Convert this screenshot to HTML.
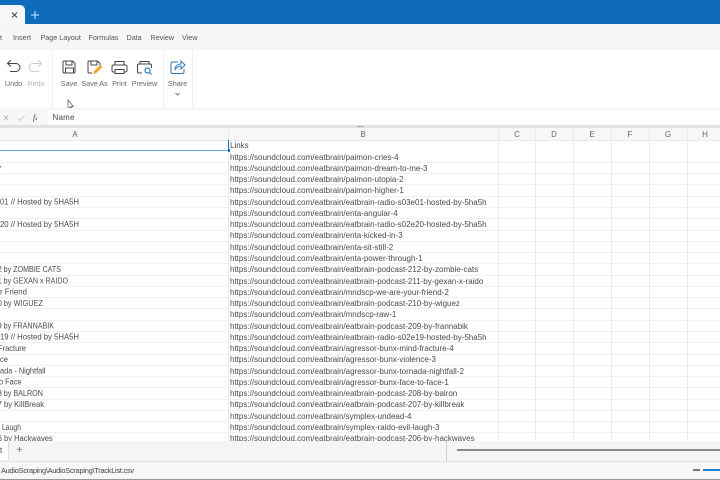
<!DOCTYPE html>
<html><head><meta charset="utf-8"><style>
html,body{margin:0;padding:0;width:720px;height:480px;overflow:hidden;background:#fff}
body{position:relative;font-family:"Liberation Sans",sans-serif;color:#444}
.a{position:absolute}
.t{position:absolute;white-space:nowrap;line-height:12px;height:12px}
.m{font-size:7.2px;top:31.500px;color:#555}
.r{font-size:7.2px;color:#666;top:78px;transform:translateX(-50%)}
.c{position:absolute;font-size:8px;line-height:12px;white-space:nowrap;color:#4a4a4a;margin-top:1.400px;left:230px}
.h{position:absolute;top:129px;font-size:8px;line-height:12px;color:#666;transform:translateX(-50%)}
.v{position:absolute;top:128px;height:313px;width:1px;background:#ebebeb}
.l{position:absolute;left:0;width:720px;height:1px;background:#f0f0f0}
svg{position:absolute;overflow:visible;fill:none}
svg text{font-family:"Liberation Sans",sans-serif;font-size:8px;fill:#4a4a4a;stroke:none}
</style></head><body>
<div class="a" style="left:0;top:0;width:720px;height:24px;background:#0f6cbd"></div>
<div class="a" style="left:0;top:5px;width:25px;height:19px;background:#f7f7f7;border-radius:0 5px 0 0"></div>
<svg style="left:0;top:0" width="60" height="24"><path d="M12 12.500l5 5M17 12.500l-5 5" stroke="#444" stroke-width="1"/><path d="M35 11v8M31 15h8" stroke="#b8d6f0" stroke-width="1.200"/></svg>
<div class="a" style="left:0;top:24px;width:720px;height:26px;background:#f6f6f6"></div>
<div class="t m" style="left:0">t</div><div class="t m" style="left:13px">Insert</div><div class="t m" style="left:40.500px">Page Layout</div><div class="t m" style="left:88.500px">Formulas</div><div class="t m" style="left:126.500px">Data</div><div class="t m" style="left:150.500px">Review</div><div class="t m" style="left:182px">View</div>
<div class="a" style="left:0;top:50px;width:720px;height:58px;background:#fff"></div>
<div class="a" style="left:52px;top:50px;width:1px;height:58px;background:#f0f0f0"></div>
<div class="a" style="left:163px;top:50px;width:1px;height:58px;background:#f0f0f0"></div>
<div class="a" style="left:192px;top:50px;width:1px;height:58px;background:#f0f0f0"></div>
<svg style="left:0;top:50px" width="200" height="58">
<path d="M11 10l-3.500 3.500 3.500 3M8 13.500h8a4 4 0 0 1 0 8h-6" stroke="#444" stroke-width="1"/>
<path d="M38 10l3.500 3.500-3.500 3M41 13.500h-8a4 4 0 0 0 0 8h6" stroke="#ccc" stroke-width="1"/>
<path d="M64 11h8.500l2.500 2.500V22a1 1 0 0 1-1 1H64a1 1 0 0 1-1-1V12a1 1 0 0 1 1-1zM66 11v4h6v-4M65.500 23v-5h8v5" stroke="#444" stroke-width="1"/>
<path d="M89 11h8.500l2.500 2.500V17M89 11a1 1 0 0 0-1 1v10a1 1 0 0 0 1 1h3M91 11v4h6v-4" stroke="#444" stroke-width="1"/>
<path d="M93 24l1-3 6-6 2.500 2-6 6z" fill="#f0a830"/>
<path d="M115 15v-3.500h9V15M113.500 15h12a1.500 1.500 0 0 1 1.500 1.500v4a1.500 1.500 0 0 1-1.500 1.500H124M115 22h-1.500a1.500 1.500 0 0 1-1.500-1.500v-4a1.500 1.500 0 0 1 1.500-1.500M115 19.500h9V23.500h-9z" stroke="#444" stroke-width="1"/>
<path d="M140 14v-2.500h9V14M142 23h-3a1.500 1.500 0 0 1-1.500-1.500v-6A1.500 1.500 0 0 1 139 14h11a1.500 1.500 0 0 1 1.500 1.500V18" stroke="#444" stroke-width="1"/>
<circle cx="147.500" cy="20.500" r="2.500" stroke="#2e7fc4" stroke-width="1.200"/><path d="M149.500 22.500l2 2" stroke="#2e7fc4" stroke-width="1.200"/>
<path d="M178 12h-5.500a1.500 1.500 0 0 0-1.500 1.500v8.500a1.500 1.500 0 0 0 1.500 1.500h10a1.500 1.500 0 0 0 1.500-1.500V19" stroke="#3f6f9e" stroke-width="1"/>
<path d="M175 20c0-4 2.500-6 6-6v-3l4 4-4 4v-3c-2.500 0-4.500 1-6 4z" stroke="#2e7fc4" stroke-width="1"/>
<path d="M175.500 43l2 2 2-2" stroke="#555" stroke-width=".8"/>
<path d="M68 50v9l2-2 1.500 3 1-.5-1.500-3h2.500z" fill="#fff" stroke="#555" stroke-width=".7"/>
</svg>
<div class="t r" style="left:13.500px">Undo</div><div class="t r" style="left:36px;color:#bbb">Redo</div><div class="t r" style="left:69px">Save</div><div class="t r" style="left:94.500px">Save As</div><div class="t r" style="left:119.500px">Print</div><div class="t r" style="left:144.500px">Preview</div><div class="t r" style="left:177.500px">Share</div>
<div class="a" style="left:0;top:108px;width:720px;height:18px;background:#f7f7f7"></div>
<div class="a" style="left:48px;top:110px;width:672px;height:15px;background:#fff"></div>
<svg style="left:0;top:108px" width="48" height="18"><path d="M4 7.500l4 4.500M8 7.500l-4 4.500" stroke="#aaa" stroke-width=".8"/><path d="M18 10l2.500 2.500 4-5" stroke="#c4c4c4" stroke-width=".8"/></svg>
<div class="t" style="left:33px;top:112px;font:italic 8px 'Liberation Serif',serif;color:#444;line-height:12px">f<span style="font-size:5px">x</span></div>
<div class="t" style="left:52.500px;top:111.500px;font-size:8px;color:#444;letter-spacing:.2px">Name</div>
<div class="a" style="left:0;top:125px;width:720px;height:3px;background:#e2e2e2"></div>
<div class="a" style="left:357px;top:126px;width:7px;height:1px;background:#aaa"></div>
<div class="a" style="left:0;top:128px;width:720px;height:12px;background:#f7f7f7"></div>
<div class="h" style="left:75px">A</div><div class="h" style="left:363px">B</div><div class="h" style="left:517px">C</div><div class="h" style="left:554px">D</div><div class="h" style="left:592px">E</div><div class="h" style="left:630px">F</div><div class="h" style="left:668px">G</div><div class="h" style="left:705px">H</div>
<div class="l" style="top:139.500px;background:#e8e8e8"></div>
<div class="l" style="top:162px"></div><div class="l" style="top:173px"></div><div class="l" style="top:184px"></div><div class="l" style="top:196px"></div><div class="l" style="top:207px"></div><div class="l" style="top:218px"></div><div class="l" style="top:230px"></div><div class="l" style="top:241px"></div><div class="l" style="top:252px"></div><div class="l" style="top:263px"></div><div class="l" style="top:275px"></div><div class="l" style="top:286px"></div><div class="l" style="top:297px"></div><div class="l" style="top:308px"></div><div class="l" style="top:320px"></div><div class="l" style="top:331px"></div><div class="l" style="top:342px"></div><div class="l" style="top:354px"></div><div class="l" style="top:365px"></div><div class="l" style="top:376px"></div><div class="l" style="top:387px"></div><div class="l" style="top:399px"></div><div class="l" style="top:410px"></div><div class="l" style="top:421px"></div><div class="l" style="top:432px"></div>
<div class="v" style="left:228px"></div><div class="v" style="left:498px"></div><div class="v" style="left:535px"></div><div class="v" style="left:573px"></div><div class="v" style="left:611px"></div><div class="v" style="left:649px"></div><div class="v" style="left:687px"></div>
<div class="a" style="left:0;top:150px;width:229px;height:1px;background:#62a5dc"></div>
<div class="a" style="left:228px;top:140px;width:1px;height:11px;background:#0f6cbd"></div>
<div class="a" style="left:227.500px;top:149px;width:2.500px;height:2.500px;background:#0f6cbd"></div>
<div class="c" style="top:139px">Links</div>
<div class="c" style="top:150.300px">https://soundcloud.com/eatbrain/paimon-cries-4</div>
<div class="c" style="top:161.500px">https://soundcloud.com/eatbrain/paimon-dream-to-me-3</div>
<div class="c" style="top:172.800px">https://soundcloud.com/eatbrain/paimon-utopia-2</div>
<div class="c" style="top:184.100px">https://soundcloud.com/eatbrain/paimon-higher-1</div>
<div class="c" style="top:195.300px">https://soundcloud.com/eatbrain/eatbrain-radio-s03e01-hosted-by-5ha5h</div>
<div class="c" style="top:206.600px">https://soundcloud.com/eatbrain/enta-angular-4</div>
<div class="c" style="top:217.900px">https://soundcloud.com/eatbrain/eatbrain-radio-s02e20-hosted-by-5ha5h</div>
<div class="c" style="top:229.100px">https://soundcloud.com/eatbrain/enta-kicked-in-3</div>
<div class="c" style="top:240.400px">https://soundcloud.com/eatbrain/enta-sit-still-2</div>
<div class="c" style="top:251.700px">https://soundcloud.com/eatbrain/enta-power-through-1</div>
<div class="c" style="top:262.900px">https://soundcloud.com/eatbrain/eatbrain-podcast-212-by-zombie-cats</div>
<div class="c" style="top:274.200px">https://soundcloud.com/eatbrain/eatbrain-podcast-211-by-gexan-x-raido</div>
<div class="c" style="top:285.400px">https://soundcloud.com/eatbrain/mndscp-we-are-your-friend-2</div>
<div class="c" style="top:296.700px">https://soundcloud.com/eatbrain/eatbrain-podcast-210-by-wiguez</div>
<div class="c" style="top:308px">https://soundcloud.com/eatbrain/mndscp-raw-1</div>
<div class="c" style="top:319.200px">https://soundcloud.com/eatbrain/eatbrain-podcast-209-by-frannabik</div>
<div class="c" style="top:330.500px">https://soundcloud.com/eatbrain/eatbrain-radio-s02e19-hosted-by-5ha5h</div>
<div class="c" style="top:341.800px">https://soundcloud.com/eatbrain/agressor-bunx-mind-fracture-4</div>
<div class="c" style="top:353px">https://soundcloud.com/eatbrain/agressor-bunx-violence-3</div>
<div class="c" style="top:364.300px">https://soundcloud.com/eatbrain/agressor-bunx-tornada-nightfall-2</div>
<div class="c" style="top:375.600px">https://soundcloud.com/eatbrain/agressor-bunx-face-to-face-1</div>
<div class="c" style="top:386.800px">https://soundcloud.com/eatbrain/eatbrain-podcast-208-by-balron</div>
<div class="c" style="top:398.100px">https://soundcloud.com/eatbrain/eatbrain-podcast-207-by-killbreak</div>
<div class="c" style="top:409.300px">https://soundcloud.com/eatbrain/symplex-undead-4</div>
<div class="c" style="top:420.600px">https://soundcloud.com/eatbrain/symplex-raido-evil-laugh-3</div>
<div class="c" style="top:431.900px">https://soundcloud.com/eatbrain/eatbrain-podcast-206-by-hackwaves</div>
<svg style="left:0;top:0" width="228" height="480">
<text x="-3" y="170.500">y</text>
<text x="0" y="204.600" textLength="79" lengthAdjust="spacingAndGlyphs">01 // Hosted by 5HA5H</text>
<text x="0" y="227.200" textLength="79" lengthAdjust="spacingAndGlyphs">20 // Hosted by 5HA5H</text>
<text x="-2.300" y="272" textLength="63.300" lengthAdjust="spacingAndGlyphs">2 by ZOMBIE CATS</text>
<text x="-2.300" y="283.300" textLength="70.300" lengthAdjust="spacingAndGlyphs">1 by GEXAN x RAIDO</text>
<text x="0" y="294.500" textLength="27" lengthAdjust="spacingAndGlyphs">r Friend</text>
<text x="-2.300" y="305.800" textLength="45.300" lengthAdjust="spacingAndGlyphs">0 by WIGUEZ</text>
<text x="-2.300" y="328.400" textLength="56.300" lengthAdjust="spacingAndGlyphs">9 by FRANNABIK</text>
<text x="0" y="339.600" textLength="79" lengthAdjust="spacingAndGlyphs">19 // Hosted by 5HA5H</text>
<text x="-2" y="350.900" textLength="28" lengthAdjust="spacingAndGlyphs">Fracture</text>
<text x="0" y="362.200" textLength="8" lengthAdjust="spacingAndGlyphs">ce</text>
<text x="0" y="373.400" textLength="45.500" lengthAdjust="spacingAndGlyphs">ada - Nightfall</text>
<text x="-1" y="384.700" textLength="22.500" lengthAdjust="spacingAndGlyphs">o Face</text>
<text x="-2.300" y="396" textLength="45.300" lengthAdjust="spacingAndGlyphs">8 by BALRON</text>
<text x="-2.300" y="407.200" textLength="46.300" lengthAdjust="spacingAndGlyphs">7 by KillBreak</text>
<text x="2" y="429.800" textLength="19" lengthAdjust="spacingAndGlyphs">Laugh</text>
<text x="-2.300" y="441" textLength="55" lengthAdjust="spacingAndGlyphs">6 by Hackwaves</text>
</svg>
<div class="a" style="left:0;top:440.500px;width:720px;height:20.500px;background:#f5f5f5"></div>
<div class="a" style="left:0;top:441px;width:8px;height:19px;background:#fff;border-right:1px solid #ddd"></div>
<div class="t" style="left:0;top:445px;font-size:8px;color:#444">t</div>
<div class="t" style="left:16.500px;top:444.500px;font-size:10px;color:#666">+</div>
<div class="a" style="left:446px;top:441px;width:1px;height:20px;background:#ccc"></div>
<div class="a" style="left:457px;top:449px;width:263px;height:2px;background:#8a8a8a"></div>
<div class="a" style="left:0;top:461px;width:720px;height:18px;background:#f7f7f7;border-top:1px solid #e2e2e2;box-sizing:border-box"></div>
<div class="t" style="left:1px;top:464.500px;font-size:7.400px;color:#444;letter-spacing:-.25px">AudioScraping\AudioScraping\TrackList.csv</div>
<div class="a" style="left:692.500px;top:469px;width:7px;height:1.500px;background:#777"></div>
<div class="a" style="left:703px;top:468.500px;width:17px;height:2px;background:#1f7fcf"></div>
<div class="a" style="left:0;top:479px;width:720px;height:1px;background:#999"></div>
</body></html>
